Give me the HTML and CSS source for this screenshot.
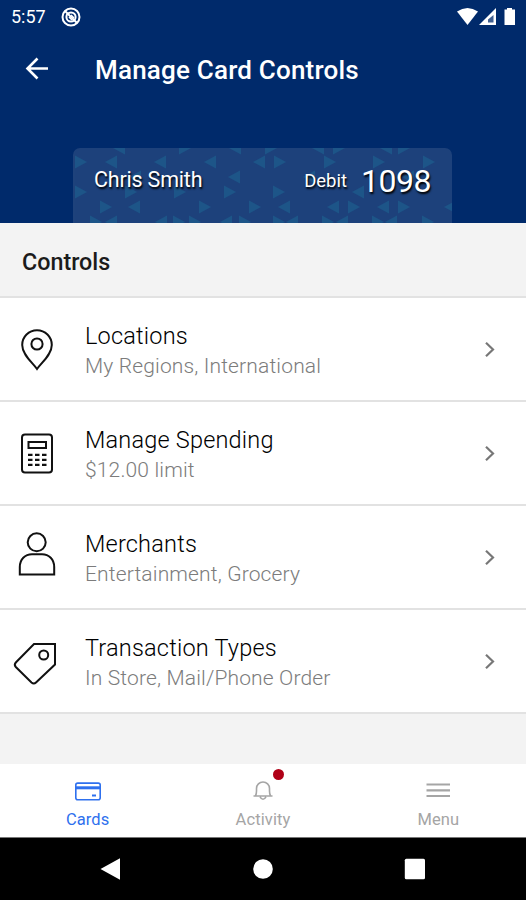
FILE: index.html
```html
<!DOCTYPE html>
<html lang="en">
<head>
  <meta charset="UTF-8">
  <meta name="viewport" content="width=device-width, initial-scale=1.0">
  <title>Manage Card Controls</title>
  <link rel="stylesheet" href="styles.css">
</head>
<body>
  <!-- Header -->
  <header class="header">
    <div class="status-bar">
      <span class="time">5:57</span>
      <svg class="status-app" width="20" height="20" viewBox="0 0 20 20" fill="none" stroke="#fff">
        <circle cx="10" cy="10" r="8.5" stroke-width="2"/>
        <circle cx="10" cy="10" r="4.6" stroke-width="2"/>
        <path d="M4 4l12 12" stroke-width="2"/>
        <path d="M8 10l3 3M10 8l3 3" stroke-width="1.5"/>
      </svg>
      <svg class="status-icons" width="60" height="20" viewBox="0 0 60 20">
        <path d="M0 4.5Q10.500 -2.500 21 4.500L10.500 18Z" fill="#fff"/>
        <path d="M39 1V18H22Z" fill="#fff"/>
        <path d="M36.500 8v7.500h-5.500v-3z" fill="#002a6b" opacity=".75"/>
        <path d="M50 1h5v1.500h3v15.500h-10.500V2.500H50z" fill="#fff"/>
      </svg>
    </div>

    <div class="title-bar">
      <svg class="back" width="24" height="24" viewBox="0 0 24 24" fill="none" stroke="#fff" stroke-width="2.600">
        <path d="M23 11.500H3M12.500 1.500l-10 10 10 10"/>
      </svg>
      <h1>Manage Card Controls</h1>
    </div>

    <div class="card">
      <svg class="card-pattern" width="379" height="75" viewBox="0 0 379 75">
        <defs>
          <path id="r" d="M-5 -6.500L7 0L-5 6.500Z"/>
          <path id="l" d="M5 -6.500L-7 0L5 6.500Z"/>
        </defs>
        <g fill="#1e5c8d" opacity=".75">
          <use href="#l" x="47" y="0"/><use href="#r" x="111" y="0"/><use href="#l" x="163" y="0"/><use href="#r" x="197" y="0"/><use href="#l" x="246" y="0"/><use href="#r" x="265" y="0"/><use href="#l" x="314" y="0"/><use href="#r" x="330" y="0"/>
          <use href="#r" x="7" y="14"/><use href="#l" x="39" y="14"/><use href="#l" x="88" y="14"/><use href="#l" x="138" y="14"/><use href="#l" x="187" y="14"/><use href="#r" x="206" y="14"/><use href="#r" x="256" y="14"/><use href="#r" x="305" y="14"/><use href="#r" x="355" y="14"/>
          <use href="#l" x="63" y="29"/><use href="#l" x="162" y="29"/><use href="#l" x="237" y="29"/><use href="#l" x="336" y="29"/>
          <use href="#r" x="7" y="44"/><use href="#r" x="57" y="44"/><use href="#r" x="106" y="44"/><use href="#r" x="156" y="44"/><use href="#r" x="205" y="44"/><use href="#l" x="286" y="44"/>
          <use href="#r" x="32" y="59"/><use href="#l" x="62" y="59"/><use href="#r" x="131" y="59"/><use href="#r" x="181" y="59"/><use href="#l" x="212" y="59"/><use href="#l" x="261" y="59"/><use href="#r" x="280" y="59"/><use href="#l" x="311" y="59"/><use href="#r" x="330" y="59"/><use href="#l" x="378" y="59"/>
          <use href="#r" x="22" y="74"/><use href="#l" x="39" y="74"/><use href="#l" x="89" y="74"/><use href="#r" x="105" y="74"/><use href="#r" x="121" y="74"/><use href="#l" x="154" y="74"/><use href="#r" x="171" y="74"/><use href="#r" x="205" y="74"/><use href="#l" x="220" y="74"/><use href="#r" x="254" y="74"/><use href="#l" x="270" y="74"/><use href="#r" x="304" y="74"/><use href="#l" x="319" y="74"/><use href="#r" x="354" y="74"/>
        </g>
      </svg>
      <div class="card-info">
        <span class="card-name">Chris Smith</span>
        <span class="card-type">Debit</span>
        <span class="card-number">1098</span>
      </div>
    </div>
  </header>

  <!-- Controls list -->
  <main class="main-content">
    <h2>Controls</h2>

    <div class="row">
      <svg class="row-icon" width="48" height="48" viewBox="0 0 48 48">
        <path d="M24 44C20 38 9.200 30 9.200 20a14.800 14.800 0 0 1 29.600 0C38.800 30 28 38 24 44z"/>
        <circle cx="24" cy="19" r="5.600"/>
      </svg>
      <div class="row-text">
        <p class="row-title">Locations</p>
        <p class="row-detail">My Regions, International</p>
      </div>
      <svg class="chevron" width="12" height="18" viewBox="0 0 12 18"><path d="M2 2.700L9 9.500l-7 6.800"/></svg>
    </div>

    <div class="row">
      <svg class="row-icon" width="48" height="48" viewBox="0 0 48 48">
        <rect x="9" y="5.500" width="30" height="38" rx="3"/>
        <rect x="15.500" y="13" width="17.500" height="6"/>
        <path d="M15 25.800h4.500m2.500 0h4.500m2.500 0H33.500M15 30.800h4.500m2.500 0h4.500m2.500 0H33.500M15 35.800h4.500m2.500 0h4.500m2.500 0H33.500" stroke-width="2.300"/>
      </svg>
      <div class="row-text">
        <p class="row-title">Manage Spending</p>
        <p class="row-detail">$12.00 limit</p>
      </div>
      <svg class="chevron" width="12" height="18" viewBox="0 0 12 18"><path d="M2 2.700L9 9.500l-7 6.800"/></svg>
    </div>

    <div class="row">
      <svg class="row-icon" width="48" height="48" viewBox="0 0 48 48">
        <circle cx="23.700" cy="9.300" r="9"/>
        <path d="M6.800 41.500V34C6.800 26.500 12 21.200 19 21.200h10c7 0 12.200 5.300 12.200 12.800v7.500z"/>
      </svg>
      <div class="row-text">
        <p class="row-title">Merchants</p>
        <p class="row-detail">Entertainment, Grocery</p>
      </div>
      <svg class="chevron" width="12" height="18" viewBox="0 0 12 18"><path d="M2 2.700L9 9.500l-7 6.800"/></svg>
    </div>

    <div class="row">
      <svg class="row-icon" width="48" height="48" viewBox="0 0 48 48">
        <path d="M21 7H42V27.500L23 45.500q-2.200 2-4.500 0L2.800 30q-2-2.200 0-4.500z"/>
        <circle cx="30.700" cy="18" r="4.500"/>
      </svg>
      <div class="row-text">
        <p class="row-title">Transaction Types</p>
        <p class="row-detail">In Store, Mail/Phone Order</p>
      </div>
      <svg class="chevron" width="12" height="18" viewBox="0 0 12 18"><path d="M2 2.700L9 9.500l-7 6.800"/></svg>
    </div>
  </main>

  <!-- Bottom tabs -->
  <nav class="tabs">
    <div class="tab active">
      <svg width="28" height="24" viewBox="0 0 28 24" fill="none" stroke="currentColor">
        <rect x="1.800" y="4.100" width="24.400" height="16.600" rx="2" stroke-width="1.600"/>
        <path d="M2 8.800h24" stroke-width="3"/>
        <path d="M18 16.500h4" stroke-width="2"/>
      </svg>
      <span>Cards</span>
    </div>
    <div class="tab">
      <svg width="28" height="24" viewBox="0 0 28 24" fill="none" stroke="currentColor" stroke-width="1.600">
        <path d="M4.500 17h19M6.500 16.800Q7.500 15 7.500 12V9.500a6.500 6.500 0 0 1 13 0V12q0 3 1 4.800M11 17.800q3 5 6 0"/>
      </svg>
      <span>Activity</span>
      <i class="badge"></i>
    </div>
    <div class="tab">
      <svg width="28" height="24" viewBox="0 0 28 24" stroke="currentColor" stroke-width="2.200">
        <path d="M2.500 5.500h23.500M2.500 11.300h23.500M2.500 17h23.500"/>
      </svg>
      <span>Menu</span>
    </div>
  </nav>

  <!-- Android navigation -->
  <div class="system-nav">
    <svg width="24" height="24" viewBox="0 0 24 24"><path d="M1.500 12L21 1.300v21.400z"/></svg>
    <svg width="24" height="24" viewBox="0 0 24 24"><circle cx="12" cy="12" r="9.800"/></svg>
    <svg width="24" height="24" viewBox="0 0 24 24"><rect x="1.800" y="1.700" width="20.200" height="20.600" rx="1.500"/></svg>
  </div>
</body>
</html>
```

FILE: styles.css
```css
* {
  box-sizing: border-box;
}

body {
  margin: 0;
  height: 900px;
  display: flex;
  flex-direction: column;
  font-family: Roboto, "Liberation Sans", sans-serif;
  background-color: #f3f3f3;
  overflow: hidden;
}

h1, h2, p {
  margin: 0;
}

svg {
  display: block;
  flex: none;
  overflow: visible;
}

/* Header */
.header {
  height: 223px;
  background-color: #002a6b;
  color: #ffffff;
}

.status-bar {
  height: 33px;
  padding: 0 9px 0 11px;
  display: flex;
  align-items: center;
}

.time {
  width: 50px;
  font-size: 18px;
}

.status-icons {
  margin-left: auto;
}

.title-bar {
  height: 71px;
  padding-left: 25px;
  display: flex;
  align-items: center;
}

.title-bar h1 {
  margin-left: 46px;
  padding-top: 3px;
  font-size: 26px;
  font-weight: 500;
  letter-spacing: 0.2px;
}

.card {
  width: 379px;
  height: 75px;
  margin: 44px auto 0 73px;
  display: grid;
  background-color: #1e427b;
  border-radius: 7px 7px 0 0;
  overflow: hidden;
}

.card-pattern,
.card-info {
  grid-area: 1 / 1;
}

.card-info {
  height: 65px;
  padding: 0 21px;
  display: flex;
  align-items: center;
  text-shadow: 1px 2px 2px #000000;
}

.card-name {
  padding-bottom: 2px;
  font-size: 21.5px;
  letter-spacing: -0.2px;
}

.card-type {
  margin-left: auto;
  font-size: 18.5px;
}

.card-number {
  margin-left: 14px;
  font-size: 32px;
  letter-spacing: -0.5px;
}

/* Controls list */
.main-content {
  flex: 1;
}

.main-content h2 {
  height: 75px;
  padding: 25px 22px;
  font-size: 23.3px;
  line-height: 28px;
  font-weight: 500;
  color: #1b1b1b;
  border-bottom: 2px solid #e2e2e2;
}

.row {
  height: 104px;
  padding: 0 30px 0 13px;
  display: flex;
  align-items: center;
  background-color: #ffffff;
  border-bottom: 2px solid #e2e2e2;
}

.row-icon {
  fill: none;
  stroke: #111111;
  stroke-width: 2;
}

.row-text {
  flex: 1;
  margin-left: 24px;
  padding-top: 4px;
}

.row-title {
  font-size: 23.5px;
  line-height: 30px;
  font-weight: 300;
  letter-spacing: 0.2px;
  color: #000000;
}

.row-detail {
  font-size: 21px;
  line-height: 30px;
  font-weight: 300;
  letter-spacing: 0.15px;
  color: #7c7c7c;
}

.chevron {
  fill: none;
  stroke: #777777;
  stroke-width: 2.2;
}

/* Bottom tabs */
.tabs {
  height: 74px;
  display: flex;
  background-color: #ffffff;
  border-bottom: 1px solid #777777;
}

.tab {
  position: relative;
  flex: 1;
  padding-top: 15px;
  display: flex;
  flex-direction: column;
  align-items: center;
  font-size: 16.5px;
  letter-spacing: 0.1px;
  color: #a5a5a5;
}

.tab span {
  margin-top: 7px;
  line-height: 20px;
}

.tab.active {
  color: #2e70ee;
}

.badge {
  position: absolute;
  top: 5px;
  left: 50%;
  width: 11px;
  height: 11px;
  margin-left: 10px;
  border-radius: 50%;
  background-color: #b00017;
}

/* Android navigation */
.system-nav {
  height: 62px;
  padding: 0 99px;
  display: flex;
  justify-content: space-between;
  align-items: center;
  background-color: #000000;
  fill: #ffffff;
}
```
